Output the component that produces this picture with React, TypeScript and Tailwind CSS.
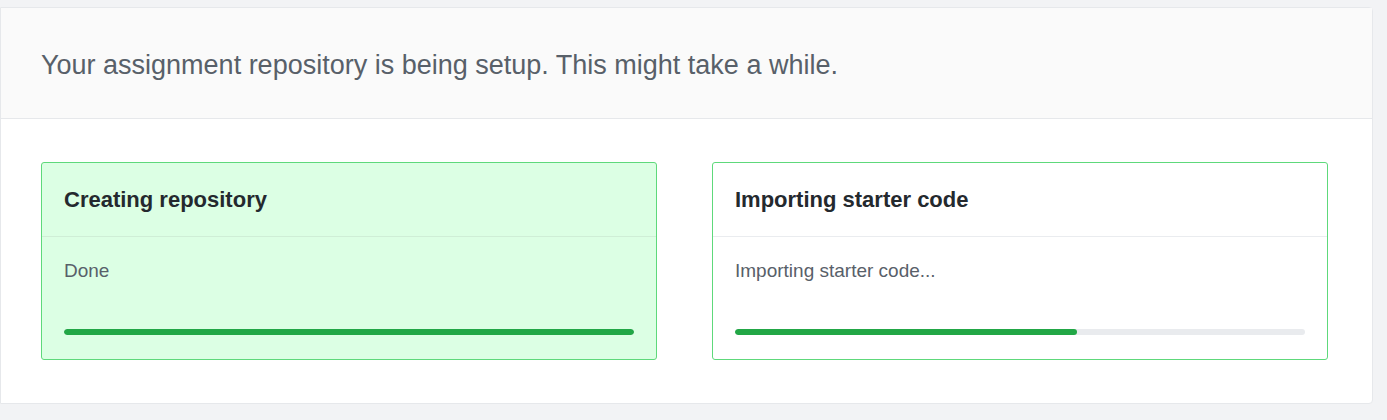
const steps = [
  { title: 'Creating repository', status: 'Done', progress: 100, done: true },
  { title: 'Importing starter code', status: 'Importing starter code...', progress: 60, done: false },
];

export default function App() {
  return (
    <div className="min-h-[420px] bg-[#f2f3f5] pt-[7px] font-['Liberation_Sans',Arial,sans-serif]">
      <div className="w-[1373px] rounded-r-[4px] border border-[#e6e8eb] bg-white">
        <div className="border-b border-[#e6e8eb] bg-[#fafafa] pt-[43px] pb-[39px] pl-[40px]">
          <p className="text-[27px] leading-[28px] text-[#586069]">
            Your assignment repository is being setup. This might take a while.
          </p>
        </div>

        <div className="flex gap-[55px] pt-[43px] pb-[43px] pl-[40px]">
          {steps.map((step) => (
            <div
              key={step.title}
              className={`w-[616px] rounded-[3px] border border-[#5ed97b] ${step.done ? 'bg-[#dcffe4]' : 'bg-white'}`}
            >
              <div className={`border-b px-[22px] py-[24px] ${step.done ? 'border-[#cfeed6]' : 'border-[#eaecef]'}`}>
                <h3 className="text-[22px] leading-[25px] font-bold text-[#24292e]">{step.title}</h3>
              </div>
              <div className="px-[22px] pt-[22px] pb-[24px]">
                <p className="text-[19px] leading-[24px] text-[#586069]">{step.status}</p>
                <div className="mt-[46px] h-[6px] w-full overflow-hidden rounded-full bg-[#e9ebee]">
                  <div className="h-full rounded-full bg-[#22a746]" style={{ width: `${step.progress}%` }} />
                </div>
              </div>
            </div>
          ))}
        </div>
      </div>
    </div>
  );
}
